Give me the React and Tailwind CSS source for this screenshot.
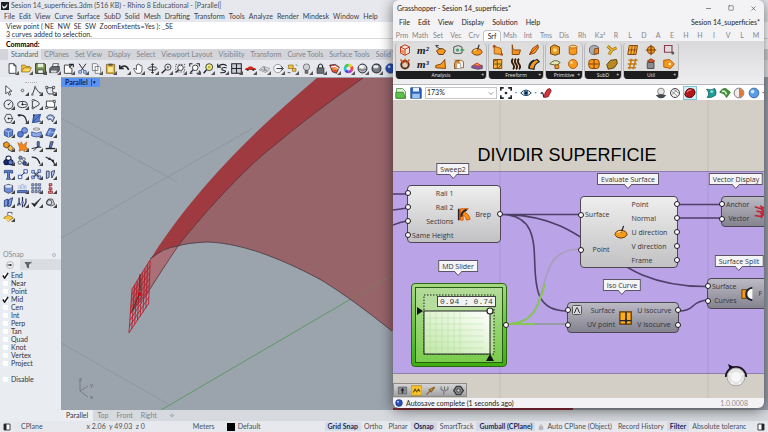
import React, { useState } from "react";
import { Minus, Square, X } from "lucide-react";

const K = "#22252b";
const O = "#f59a1c";
const B = "#5b7fd0";

// 16x16 drawings, keyed by command
const icons = {
  file: <path d="M3 1h7l3 3v11H3zM10 1v3h3" fill="#fff" stroke={K} strokeWidth="1.2" />,
  open: <><path d="M1 13V3h5l1 2h6v2" fill="#f6c443" stroke="#8a6410" /><path d="M1 13l3-6h11l-3 6z" fill="#ffd95e" stroke="#8a6410" /></>,
  save: <><path d="M1 1h13l1 1v13H1z" fill="#7f9a55" stroke={K} strokeWidth="1.4" /><path d="M4 1h8v5H4z" fill="#e8edd8" /><path d="M4 10h8v5H4z" fill="#fff" stroke={K} /></>,
  print: <><path d="M5 6l1-5h8l-2 5" fill="#fff" stroke={K} /><path d="M1 8l3-3h11v6l-3 3H1z" fill="#666a70" stroke={K} /><path d="M3 11h8v3H3z" fill="#ddd" /></>,
  note: <><path d="M2 3h8v4l3 1v7H2z" fill="#fff" stroke={K} strokeWidth="1.2" /><path d="M9 2h6v4M9 6l5-4" fill="none" stroke={K} strokeWidth="1.6" /></>,
  cut: <><path d="M3 1l7 10M13 1L6 11" stroke={K} strokeWidth="1.4" /><circle cx="4.500" cy="13" r="2" fill="none" stroke="#3c62b5" strokeWidth="1.500" /><circle cx="11.500" cy="13" r="2" fill="none" stroke="#3c62b5" strokeWidth="1.500" /></>,
  copy: <path d="M2 1h6l2 2v8H2zM6 5h6l2 2v8H6z" fill="#fff" stroke="#555a62" />,
  paste: <><path d="M2 2h12v13H2z" fill="#e6b736" stroke="#6b5314" /><path d="M5 1h6v3H5z" fill="#555" /><path d="M4.500 6h7v7h-7z" fill="#fbe99c" /></>,
  undo: <path d="M2 7c4-4 9-4 12 3M1 3v5h6" fill="none" stroke={K} strokeWidth="2.200" />,
  hand: <path d="M5 15c-2-3-4-5-4-7l2 0 2 2V3q1-1 2 0V2q1-1 2 0v1q1-1 2 0v1q2-1 2 1v6l-2 4z" fill="#fff" stroke={K} />,
  orbit: <><path d="M8 1v14M6 3l2-2 2 2M6 13l2 2 2-2" fill="none" stroke={K} strokeWidth="1.300" /><ellipse cx="8" cy="8" rx="6.500" ry="2.500" fill="none" stroke={K} strokeWidth="1.300" /></>,
  zoom: <><circle cx="10" cy="6" r="4.500" fill="#f4f6fa" stroke={K} strokeWidth="1.200" /><path d="M7 9l-6 6" stroke={K} strokeWidth="2" /><path d="M10 4v4M8 6h4" stroke={K} /></>,
  zoomWin: <><path d="M1 2h13v11H1z" fill="none" stroke={K} strokeDasharray="2 2" /><circle cx="8" cy="7" r="4" fill="#f4f6fa" stroke={K} strokeWidth="1.200" /><path d="M5 10l-4 4" stroke={K} strokeWidth="2" /></>,
  zoomExt: <><path d="M1 5V1h4M11 1h4v4M15 11v4h-4M5 15H1" fill="none" stroke={K} strokeWidth="1.500" /><circle cx="9" cy="7" r="4" fill="#fff" stroke={K} strokeWidth="1.200" /><path d="M6 10l-4 4" stroke={K} strokeWidth="2" /></>,
  zoomSel: <><circle cx="9" cy="6" r="5" fill="#f3ef8a" stroke={K} strokeWidth="1.200" /><circle cx="9" cy="6" r="2" fill="#c9b93a" /><path d="M5 10l-4 5" stroke={K} strokeWidth="2.200" /></>,
  undoView: <path d="M2 5c4-4 9-3 12-1M1 1v5h5M14 7c-9-2-8 4-4 4s3 4-5 3" fill="none" stroke={K} strokeWidth="1.600" />,
  grid4: <><path d="M1 1h14v14H1z" fill="#c9ccd1" stroke={K} strokeWidth="1.500" /><path d="M8 1v14M1 8h14" stroke={K} strokeWidth="1.500" /></>,
  car: <><path d="M0 9q1-2 4-2l2-2h4l2 2q3 0 4 2v1H0z" fill="#d2291d" /><circle cx="4" cy="10" r="1.400" fill={K} /><circle cx="12" cy="10" r="1.400" fill={K} /></>,
  plane: <><path d="M0 10l6-5 10 3-6 6z" fill="#d5d8dd" stroke="#8d9198" /><path d="M3 9l9 3M6 6l6 5M8 5v6" stroke="#777" /></>,
  cplane: <><circle cx="7" cy="8" r="6" fill="#f6f7f9" stroke="#777" /><path d="M5 8h9M12 5l3 3-3 3" stroke={K} fill="none" strokeWidth="1.300" /></>,
  select: <><path d="M2 3h7v5H2z" fill="#f5c43c" stroke="#8b6a1a" /><path d="M8 8h5v4H8z" fill="#f5c43c" stroke="#8b6a1a" /><path d="M13 2l2 2M1 14h4" stroke={K} /></>,
  bulb: <><circle cx="8" cy="6" r="4.700" fill="#cdd0d6" stroke="#555" /><path d="M6 11h4v4H6z" fill="#777" stroke="#444" /></>,
  lock: <><path d="M5 7V4q3-5 6 0v3" fill="none" stroke={K} strokeWidth="1.600" /><path d="M3 7h10v8H3z" fill="#6b7078" stroke={K} /></>,
  layers: <><path d="M1 3l8-1 6 4-4 9-6-2z" fill="#e34b3d" stroke={K} /><path d="M3 6l6-1 5 3" fill="none" stroke="#fff" strokeWidth="1.600" /><path d="M5 9l5-1 2 2" fill="none" stroke="#f3b13e" strokeWidth="2" /></>,
  wheel: <g fill="none" strokeWidth="4"><path d="M8 3a5 5 0 0 1 4.300 2.500" stroke="#e8d02a" /><path d="M12.300 5.500a5 5 0 0 1 0 5" stroke="#f0452b" /><path d="M12.300 10.500A5 5 0 0 1 8 13" stroke="#d22fc0" /><path d="M8 13a5 5 0 0 1-4.300-2.500" stroke="#3a4be0" /><path d="M3.700 10.500a5 5 0 0 1 0-5" stroke="#2ac1d8" /><path d="M3.700 5.500A5 5 0 0 1 8 3" stroke="#45c53c" /></g>,
  ball: <><circle cx="8" cy="8" r="6.500" fill="#b3b6bc" stroke={K} strokeWidth="1.400" /><ellipse cx="7" cy="5.500" rx="4" ry="2.500" fill="#f3f4f6" /><path d="M2 9q6 3 12 0" stroke="#555" fill="none" /></>,
  ballDark: <><circle cx="8" cy="8" r="6.500" fill="#777b82" stroke={K} strokeWidth="1.500" /><ellipse cx="7" cy="5.500" rx="4" ry="2.500" fill="#e6e8ec" /></>,
  ballBlue: <><circle cx="8" cy="8" r="6.800" fill="#274fb5" stroke="#142b6b" /><circle cx="6" cy="5.500" r="2" fill="#b7c9f5" /></>,
  arrow: <path d="M4 1v12l3-3 2 5 2-1-2-5h4z" fill="#fff" stroke={K} strokeWidth="1.100" />,
  point: <circle cx="8" cy="8" r="1.800" fill="#fff" stroke={K} />,
  polyline: <><path d="M2 14L6 3l4 6 4 3" fill="none" stroke={K} strokeWidth="1.200" /><path d="M1 13h2v2H1zM5 2h2v2H5zM13 11h2v2h-2z" fill="#fff" stroke={K} strokeWidth=".7" /></>,
  curve: <><path d="M3 4h9q-3 4 1 9H5Q1 9 3 4" fill="none" stroke={K} strokeWidth="1.200" /><path d="M1 2h3v3H1zM11 2h3v3h-3zM12 11h3v3h-3z" fill="#fff" stroke={K} /></>,
  circle: <><circle cx="8" cy="8" r="6.500" fill="none" stroke={K} strokeWidth="1.300" /><path d="M8 8l4-4" stroke={K} /><circle cx="8" cy="8" r="1.200" fill={K} /></>,
  ellipse: <><ellipse cx="8" cy="8" rx="7" ry="4.500" fill="none" stroke={K} strokeWidth="1.300" /><path d="M8 4v4h6" fill="none" stroke={K} /><circle cx="8" cy="8" r="1.500" fill={K} /></>,
  arc: <><path d="M4 1q11 4 7 8l-9 5V3" fill="none" stroke={K} strokeWidth="1.200" /><circle cx="3" cy="2" r="1.500" fill="#fff" stroke={K} /><circle cx="3" cy="13" r="1.500" fill="#fff" stroke={K} /></>,
  rect: <><path d="M2 3h12v9H2z" fill="#fff" stroke={K} strokeWidth="1.200" /><path d="M1 11h3v3H1zM12 2h3v3h-3z" fill="#fff" stroke={K} /></>,
  polygon: <><path d="M5 2h6l3 6-3 6H5L2 8z" fill="none" stroke={K} strokeWidth="1.100" /><path d="M8 8h6" stroke={K} /><circle cx="8" cy="8" r="1.300" fill={K} /></>,
  fillet: <><path d="M1 3h5q7 0 8 11" fill="none" stroke={K} strokeWidth="1.700" /><path d="M2 2h3v3H2z" fill={K} /></>,
  surface: <><path d="M4 3l10-1-3 11-9 1z" fill={B} stroke="#24428c" /><path d="M4 3v11M14 2L2 14" stroke="#24428c" /><circle cx="4" cy="3" r="1.200" fill={K} /><circle cx="13" cy="12" r="1.200" fill={K} /></>,
  sheet: <><path d="M2 6q6-7 12 0l-3 7q-2-6-6-3z" fill="#93aae6" stroke={K} /><path d="M5 7q4-3 6 2" fill="none" stroke="#fff" strokeWidth="1.500" /></>,
  box: <><path d="M2 5l5-3 7 2v8l-6 3-6-3z" fill={B} stroke="#1d3470" /><path d="M2 5l6 2 6-3M8 7v8" stroke="#cfdaf8" fill="none" /></>,
  spheres: <><circle cx="5" cy="10.500" r="4.300" fill={B} stroke="#1d3470" /><circle cx="11" cy="5" r="4.300" fill="#7896df" stroke="#1d3470" /></>,
  cylinder: <><ellipse cx="8" cy="3" rx="5" ry="1.500" fill="#fff" stroke="#555" /><path d="M1 7q7 4 14 0v6q-7 3-14 0z" fill="#8ea9ea" stroke="#24428c" /></>,
  slab: <><path d="M6 2l9 1-5 11-9-2z" fill={B} stroke="#1d3470" /><path d="M4 7l9 1M8 3L5 12" stroke="#c6d3f8" /></>,
  join: <><path d="M1 3l5-2 3 3 0 4-4 2-4-2z" fill={O} stroke={K} /><path d="M7 9l4-3 4 4-2 5-5-2z" fill="#f6b94d" stroke={K} /></>,
  explode: <path d="M1 2l4 3 1-4 3 5 5-5-1 7 3 4-5 1 0 3-3-3-5 2 1-5z" fill="#f5861c" stroke="#a24a06" strokeWidth=".7" />,
  trim: <><path d="M9 1h3v7H9z" fill={B} stroke={K} /><path d="M1 11l9-2M4 14l5-5h6" stroke={K} strokeWidth="1.400" fill="none" /></>,
  split: <><path d="M8 1h4l-3 9H6z" fill={B} stroke={K} /><path d="M1 11h14" stroke={K} strokeWidth="2" /></>,
  boolean: <g stroke="#0e1a4a" strokeWidth="1.500"><circle cx="8" cy="5" r="3.700" fill="#fff" /><circle cx="5" cy="10.500" r="3.700" fill="#1c2a66" /><circle cx="11" cy="10.500" r="3.700" fill={B} /></g>,
  group: <><circle cx="5" cy="4" r="2.400" fill="#7896df" stroke={K} /><circle cx="10" cy="6" r="2" fill="#fff" stroke={K} /><circle cx="4" cy="11" r="2.400" fill="#fff" stroke={K} /><circle cx="11" cy="12" r="2.800" fill="#2b53b4" stroke={K} /></>,
  blend: <path d="M1 3q9-1 12 10" fill="none" stroke={K} strokeWidth="1.800" />,
  edit: <><path d="M1 3l6 3q6 2 7 9" fill="none" stroke={K} strokeWidth="1.600" /><path d="M5 4h3v3H5zM10 7h3v3h-3z" fill={K} /></>,
  text: <path d="M2 2h12v4h-2l-1-1H9.500v8l1.500 1v1H5v-1l1.500-1V5H4L3 6H2z" fill={B} stroke="#1d3470" />,
  move: <><path d="M2 9h5v5H2zM10 1h5v5h-5z" fill="#fff" stroke="#274fb5" strokeWidth="1.300" /><path d="M6 10l5-5" stroke={K} strokeWidth="1.300" /></>,
  array: <><path d="M1 2h4v4H1zM10 1h4v4h-4zM1 10h4v4H1zM10 10h4v4h-4zM6 6h4v4H6z" fill="#c7d4f7" stroke="#27418c" /><path d="M4 5l8 7M12 4l-9 8" stroke={K} /></>,
  mirror: <path d="M2 3h4v9l-4 2zM9 4l5-2-1 5-3 6z" fill="#b3c4f2" stroke="#27304f" strokeWidth="1.200" />,
  solid: <><path d="M2 4l6-2 6 2v8l-6 3-6-3z" fill="#6d8cd8" stroke={K} /><ellipse cx="8" cy="5" rx="5" ry="2" fill="#dbe4fb" /></>,
  project: <><path d="M3 9V4h2v5M7 9V2h2v7M11 9V4h2v5" fill="#fff" stroke="#93a6d8" /><path d="M1 11h14l-2 3H0z" fill={B} stroke="#1d3470" /></>,
  grid9: <path d="M1 1h3v3H1zM6 1h3v3H6zM11 1h3v3h-3zM1 6h3v3H1zM6 6h3v3H6zM11 6h3v3h-3zM1 11h3v3H1zM6 11h3v3H6zM11 11h3v3h-3z" fill="#a8b8e6" stroke="#3a4770" />,
  chain: <path d="M6 1h4v3H6zM7 4v3M6 7h4v3H6zM8 10v2M5 12h6v3H5z" fill="#e88" stroke="#8c2f2f" strokeWidth="1.200" />,
  panels: <path d="M2 5l5-2v9l-5 2zM8 4l6-3-3 12-4 1z" fill="#7d99e2" stroke="#1d3470" strokeWidth="1.200" />,
  twist: <><path d="M3 1v7l2 4M8 0v15M13 2v6l-3 6M2 9l-1 4" stroke="#27304f" strokeWidth="1.800" fill="none" /><circle cx="8" cy="8" r="2" fill={B} /></>,
  check: <path d="M1 9l4 5 9-12-9 8z" fill={K} stroke={K} />,
  shapes: <><path d="M2 10l3-7h6l3 8-5 2z" fill="#d7dade" stroke={K} /><circle cx="6" cy="8" r="4" fill="none" stroke={K} /></>,
  gumball: <><path d="M1 10q7-7 14 0l-7 5z" fill="#f5c43c" stroke="#8b6a1a" /><path d="M7 6V2h6v3" fill="#fff" stroke={K} /><path d="M3 12l6 2" stroke="#fff2b0" strokeWidth="1.500" /></>,
  // grasshopper
  brep: <><path d="M2 4l6-3 6 3v8l-6 3-6-3z" fill="#f3e0d6" stroke="#c03a14" strokeWidth="1.300" /><path d="M2 4l6 3 6-3M8 7v8" fill="none" stroke="#c03a14" strokeWidth="1.300" /><path d="M3 11l4 2V9L3 7z" fill="#f08a5c" /></>,
  hoop: <><circle cx="8" cy="9" r="5" fill="#d9cdbd" stroke="#5a2a0c" strokeWidth="2.500" /><path d="M2 2l4 5M8 1v5M14 2l-4 5" stroke="#d3531c" strokeWidth="2" /></>,
  bowl: <><path d="M2 9q6-6 12 0l-3 5H5z" fill={O} stroke="#5a3206" strokeWidth="1.200" /><path d="M1 2l6 5M3 5L1 2h4" stroke={K} fill="none" /></>,
  wedge: <path d="M1 10l7-2 5-6 1 12-13-1z" fill={O} stroke="#7a3e05" strokeWidth="1.200" />,
  tag: <><path d="M1 4q6-4 11 0v8q-6 2-11 0z" fill="#d7dbd9" stroke="#4c5753" strokeWidth="1.300" /><circle cx="6" cy="8" r="2" fill="#3c9c5f" /><path d="M10 8h5" stroke="#3c9c5f" strokeWidth="2" /></>,
  roll: <><path d="M2 3h9l3 2v8H8" fill="#f7efdf" stroke="#8a4a0c" /><path d="M2 14V7q1-4 6-4v11z" fill={O} stroke="#7a3e05" /><path d="M5 7h5v7H5z" fill="#fff" stroke="#999" /></>,
  pot: <><path d="M1 11q1-5 7-5t7 5q-2 4-7 4t-7-4z" fill={O} stroke="#6b3605" strokeWidth="1.100" /><path d="M8 9l3-8" stroke={K} strokeWidth="1.500" /><path d="M4 9q2-2 5-1" stroke="#ffe3a3" strokeWidth="1.500" fill="none" /></>,
  dome: <><path d="M1 11l5-3 9 2v4l-6 1-8-2z" fill="#8e4fa8" stroke="#444" /><path d="M4 10q4-7 9 1z" fill="#f08a5c" stroke="#c03a14" /></>,
  quad: <><path d="M3 3l9 3 1 8-10-1z" fill="#f6a63a" stroke="#a05a0c" strokeWidth="1.300" /><circle cx="3" cy="3" r="2" fill="#b84c17" /><circle cx="13" cy="14" r="1.700" fill="#b84c17" /></>,
  mesh: <><path d="M2 2h11v12H2z" fill="#f6b23c" stroke="#7a4a0a" strokeWidth="1.300" /><path d="M2 8h11M7 2v12M2 5l5-3M8 14l5-6" stroke="#7a4a0a" strokeWidth="1.300" /></>,
  vee: <path d="M3 1q0 6 3 7l8 0-2 6H3z" fill="#f2921f" stroke="#8a4506" strokeWidth="1.300" />,
  waves: <path d="M4 1q-3 3 0 7t0 7M8 1q-3 3 0 7t0 7M12 1q-3 3 0 7t0 7" fill="none" stroke="#3a1d04" strokeWidth="2.500" />,
  leaf: <><path d="M2 14L6 6l7-5 1 4-5 7z" fill={O} stroke="#7a3e05" strokeWidth="1.200" /><path d="M2 14L13 3" stroke="#c9360f" strokeWidth="1.300" /></>,
  sweep: <><path d="M2 14q0-9 10-12l3 3q-7 3-7 10z" fill={O} stroke={K} strokeWidth="1.600" /><path d="M1 14q0-8 7-11" stroke={K} strokeWidth="2" fill="none" /></>,
  can: <><path d="M2 4l5-3 7 3v9l-6 2-6-2z" fill="#e79a22" stroke="#6b4108" strokeWidth="1.300" /><circle cx="8" cy="8" r="2.500" fill="#ffd87a" /></>,
  cyl: <><path d="M3 3v10q5 3 10 0V3" fill={O} stroke="#a9540a" strokeWidth="1.200" /><ellipse cx="8" cy="3.500" rx="5" ry="2" fill="#ffcb6d" stroke="#a9540a" /></>,
  cone: <><path d="M1 8q6-8 14-2l-4 3-1 5-3-5z" fill="#e5e6b8" stroke="#5d5a26" strokeWidth="1.200" /><path d="M8 9h5v5H8z" fill={O} stroke="#7a3e05" /></>,
  orange: <><circle cx="8" cy="8" r="6" fill={O} stroke="#b55c08" strokeWidth="1.200" /><circle cx="6" cy="6" r="2" fill="#ffd48a" /></>,
  subd: <><path d="M2 5q5-6 12-1v8q-7 5-12-1z" fill="#a9abb0" stroke="#555" /><path d="M9 6h5v7H8z" fill="#e8862a" stroke="#7a3e05" /></>,
  quadBall: <><rect x="1" y="2" width="14" height="12" rx="4" fill={O} stroke="#8a4506" strokeWidth="1.300" /><path d="M8 2v12M1 8h14" stroke="#8a4506" strokeWidth="1.500" /></>,
  pipes: <><path d="M2 3l6 5 6-3M8 8l-4 6" fill="none" stroke="#8a6410" strokeWidth="4" /><path d="M2 3l6 5 6-3M8 8l-4 6" fill="none" stroke="#e9b32c" strokeWidth="2.500" /></>,
  blob: <path d="M1 9l5-6 8-1 1 5-4 6-8 2z" fill="#b98a22" stroke="#5d420a" strokeWidth="1.300" />,
  lattice: <><path d="M3 2h11l-2 12H1z" fill="#f6b23c" stroke="#8a4506" strokeWidth="1.300" /><path d="M7 2L5 14M11 2L9 14M2 8h11" stroke="#8a4506" strokeWidth="1.200" /></>,
  hatch: <path d="M2 3h12M1 8h12M1 13h11M6 1L3 15M12 1L8 15" stroke="#c57a12" strokeWidth="2" />,
  globe: <><circle cx="8" cy="8" r="5" fill={O} stroke="#7a3e05" strokeWidth="1.200" /><path d="M8 1v14M1 8h14" stroke="#7a3e05" strokeWidth="1.500" /></>,
  bin: <><path d="M3 6h9v8H3z" fill="#888b91" stroke="#333" /><path d="M3 4l5-3 5 3-5 2z" fill="#e4572a" stroke="#7a2605" /></>,
  frame: <><path d="M2 2h10v9H2z" fill="none" stroke="#8c3a4c" strokeWidth="1.500" /><circle cx="13" cy="12" r="2" fill="#555" /></>,
  price: <><path d="M1 3l8-1 6 6-5 6-9-2z" fill={O} stroke="#a85408" strokeWidth="1.200" /><circle cx="9" cy="8" r="1.500" fill="#fff" /></>,
  ghOpen: <><path d="M2 2h8l4 4v9H2z" fill="#dcefd5" stroke="#3d8a35" /><path d="M1 7h10l3 8H1z" fill="#5fc04a" stroke="#2d7a25" /></>,
  ghSave: <><path d="M1 1h13l1 2v12H1z" fill="#2b67bf" stroke="#16407f" /><path d="M4 1h8v5H4z" fill="#e6eefb" /><path d="M3 9h10v6H3z" fill="#9fc1ee" /></>,
  focus: <><path d="M1 5V1h4M11 1h4v4M15 11v4h-4M5 15H1v-4" fill="none" stroke={K} strokeWidth="2.400" /><circle cx="8" cy="8" r="1.800" fill={K} /></>,
  eye: <><path d="M1 8q7-8 14 0-7 7-14 0z" fill="#fff" stroke="#1d3850" strokeWidth="1.300" /><circle cx="8" cy="8" r="3.200" fill="#2a6a9c" /><circle cx="8" cy="8" r="1.300" fill="#000" /></>,
  sketch: <><path d="M1 9q2-3 3 0t1 5" fill="none" stroke={K} strokeWidth="1.500" /><path d="M6 14q-1-6 4-11l3-1 2 3-4 8z" fill="#d4343c" stroke="#7c1218" /></>,
  pvOff: <><circle cx="8" cy="6" r="4.500" fill="#e6e6e6" stroke="#666" /><path d="M1 11q7-3 14 0-3 4-7 4t-7-4z" fill="#44474d" /></>,
  pvWire: <><circle cx="8" cy="8" r="6" fill="#f2f2f4" stroke="#333" strokeWidth="1.200" /><path d="M3 5l9 8M6 3l8 6M3 11L11 3" stroke="#777" /></>,
  pvRed: <><path d="M1 10Q3 2 8 2l5 1q3 4 1 7-3 5-7 4-5 0-6-4z" fill="#b3191b" stroke="#5a0709" strokeWidth="1.300" /><path d="M4 7q2-4 6-3" fill="none" stroke="#ef7a76" strokeWidth="1.500" /></>,
  teal: <><path d="M2 3q6 2 11-1 3 5 1 9-5 4-11 3 4-6-1-11z" fill="#1f9c98" stroke="#0f5f5c" /><circle cx="9" cy="6" r="2" fill="#7fe0d8" /></>,
  green: <><path d="M1 7q3-6 8-5l6 5-5 7q-2-6-9-7z" fill="#3f9a35" stroke="#1d5c17" /><path d="M4 6q4-2 6 4" stroke="#e4f6df" strokeWidth="2" fill="none" /></>,
  half: <><circle cx="8" cy="8" r="6.500" fill="#eee" stroke="#555" /><path d="M8 2a6 6 0 0 1 0 12z" fill="#e07a3a" /></>,
  blue: <><circle cx="8" cy="8" r="6.500" fill="#5b9be6" stroke="#235497" /><circle cx="6" cy="6" r="2.500" fill="#cfe3fb" /></>,
  // node and widget pictures
  sweep2: <><path d="M2 2v13" stroke={K} strokeWidth="2" /><path d="M4 2h9l-4 4q5 2 6 8l-4 1q-1-5-4-6v6H4z" fill="#ff9412" stroke="#d2500a" /><path d="M5 11Q5 5 11 3" stroke={K} strokeWidth="2.300" fill="none" /></>,
  iso: <><path d="M1 1h13v14H1z" fill="#ffab1c" stroke="#5c3700" strokeWidth="1.400" /><path d="M8 1v14M1 11h13" stroke={K} strokeWidth="1.700" /><circle cx="8" cy="11" r="1.600" fill={K} /></>,
  splitSrf: <><path d="M1 3h5v10H1z" fill={O} stroke="#5c3700" /><path d="M13 1Q6 2 6 8t7 7" fill="#fff" stroke={K} strokeWidth="2.300" /></>,
  vectors: <path d="M2 2l6 2 3-1M4 7l6 1 3-1M2 12l6 1 3-2M8 1l4 2-3 3M10 5l4 2-3 3M8 9l4 2-3 4" fill="none" stroke="#c42433" strokeWidth="1.800" />,
  lamp: <><path d="M2 3h12v10H2z" fill="#8d8f94" stroke="#555" /><path d="M8 4l3 4H9v4H7V8H5z" fill={K} /></>,
  quake: <><path d="M0 1h16v14H0z" fill="#f6c52c" stroke="#b08508" /><path d="M3 11l3-5 2 4 3-4 2 4" fill="none" stroke="#6b4a00" strokeWidth="1.500" /></>,
  plug: <path d="M2 14l5-5M6 7l3 3 5-7z" fill={O} stroke="#8b6222" strokeWidth="1.800" />,
  fork: <path d="M3 2v4l4 3v5M8 2v6M13 2v4L9 9" fill="none" stroke="#6d6f75" strokeWidth="1.500" />,
  gear: <><path d="M5 2h6l4 6-4 6H5L1 8z" fill="#8a8c90" stroke="#3a3c40" strokeWidth="2" /><circle cx="8" cy="8" r="2.600" fill="#c5c6c8" stroke="#3a3c40" strokeWidth="1.400" /></>,
  sidebar: <><path d="M2 2h12v12H2z" fill="#fff" stroke={K} strokeWidth="1.700" /><path d="M2 2h5v12H2z" fill={K} /></>,
  filter: <path d="M2 3h11l-4 5v6l-3-2V8zM14 1v4" fill="#666a72" stroke={K} />,
};

function Icon({ name, className = "size-3" }) {
  return (
    <svg viewBox="0 0 16 16" fill="none" className={className + " shrink-0"} aria-hidden="true">
      {icons[name]}
    </svg>
  );
}

const menus = ["File", "Edit", "View", "Curve", "Surface", "SubD", "Solid", "Mesh", "Drafting", "Transform", "Tools", "Analyze", "Render", "Mindesk", "Window", "Help"];
const toolTabs = ["Standard", "CPlanes", "Set View", "Display", "Select", "Viewport Layout", "Visibility", "Transform", "Curve Tools", "Surface Tools", "Solid Tools"];
const stdTools = ["file", "open", "save", "print", "note", "cut", "copy", "paste", "undo", "hand", "orbit", "zoom", "zoomWin", "zoomExt", "zoomSel", "undoView", "grid4", "car", "plane", "cplane", "select", "bulb", "lock", "layers", "wheel", "ball", "ballDark", "ballBlue"];
const sideTools = ["arrow", "point", "polyline", "curve", "circle", "ellipse", "arc", "rect", "polygon", "fillet", "surface", "sheet", "box", "spheres", "cylinder", "slab", "join", "explode", "trim", "split", "boolean", "group", "blend", "edit", "text", "move", "array", "mirror", "solid", "project", "grid9", "chain", "panels", "twist", "check", "shapes", "gumball"];
const snaps = ["End", "Near", "Point", "Mid", "Cen", "Int", "Perp", "Tan", "Quad", "Knot", "Vertex", "Project"];

const ghTabs = ["Prm", "Math", "Set", "Vec", "Crv", "Srf", "Msh", "Int", "Tms", "Dis", "Rh", "Ka²"];
const ghTabsShort = ["R", "L", "D", "A", "E", "H", "H", "I", "V", "L", "M"];
const ribbon = [
  { name: "Analysis", top: ["brep", "m²", "bowl", "tag", "pot"], bottom: ["hoop", "m³", "wedge", "roll", "dome"] },
  { name: "Freeform", top: ["quad", "vee", "leaf"], bottom: ["mesh", "waves", "sweep"] },
  { name: "Primitive", top: ["can", "cyl"], bottom: ["cone", "orange"] },
  { name: "SubD", top: ["subd", "pipes"], bottom: ["quadBall", "blob"] },
  { name: "Util", top: ["lattice", "globe", "frame"], bottom: ["hatch", "bin", "price"] },
];

function Snap({ label, checked, onChange }) {
  return (
    <label className="flex h-2 items-center gap-[3px]">
      <span className="relative flex size-[5px]">
        <input type="checkbox" checked={checked} onChange={onChange} className="size-[5px] appearance-none bg-white" />
        {checked && (
          <svg viewBox="0 0 8 8" className="pointer-events-none absolute -left-px -top-px size-[7px]">
            <path d="M1 4l2 3 4-6" fill="none" stroke="#111" strokeWidth="1.600" />
          </svg>
        )}
      </span>
      {label}
    </label>
  );
}

function SidePanel() {
  const [on, setOn] = useState({ End: true, Mid: true });
  const toggle = (s) => setOn({ ...on, [s]: !on[s] });
  return (
    <aside className="flex w-[61px] shrink-0 flex-col bg-[#e9ecf1]">
      <div className="mx-auto mt-px h-[5px] w-3 border-b border-dotted border-[#b9a9a4]" />
      <div className="grid grid-cols-4 pl-px pr-1">
        {sideTools.map((t) => (
          <button key={t} aria-label={t} className="relative flex h-[14px] items-center justify-center">
            <Icon name={t} className="size-[11px]" />
            {t !== "arrow" && <span className="absolute bottom-px right-0 border-2 border-transparent border-b-[#444] border-r-[#444]" />}
          </button>
        ))}
      </div>
      <div className="mt-[27px] flex items-center justify-between px-[3px] text-[#8a8e96]">
        <span>OSnap</span>
        <span className="mr-[2px] size-1 rounded-full border border-[#b4b8bf]" />
      </div>
      <div className="flex h-[11px] items-center bg-[#d9dce1]">
        <button aria-label="Object snaps" className="flex h-full w-5 items-center justify-center bg-[#eceef2]">
          <svg viewBox="0 0 16 16" className="size-2"><circle cx="8" cy="8" r="7" fill="none" stroke="#888" /><path d="M3 8h8" stroke="#333" strokeWidth="2" /><circle cx="9" cy="8" r="2" fill="#333" /></svg>
        </button>
        <button aria-label="Filter" className="ml-1 flex"><Icon name="filter" className="size-2" /></button>
      </div>
      <div className="mt-px flex flex-col pl-[3px] text-[#2f333b]">
        {snaps.map((s) => <Snap key={s} label={s} checked={!!on[s]} onChange={() => toggle(s)} />)}
        <div className="h-2" />
        <Snap label="Disable" checked={!!on.Disable} onChange={() => toggle("Disable")} />
      </div>
    </aside>
  );
}

function Viewport() {
  const steps = [0, 1, 2, 3, 4, 5, 6, 7];
  return (
    <div className="relative min-h-0 flex-1 overflow-hidden bg-[#9ba3ad]">
      <svg viewBox="61 77 707 333" preserveAspectRatio="xMinYMin slice" className="size-full" fill="none">
        <g stroke="#8a929b" strokeWidth=".7">
          <path d="M61 118L177 182M61 238L253 128M61 343L168 404" />
        </g>
        <path d="M161 410L392 275L500 212" stroke="#5d9a61" strokeWidth="1" />
        <path d="M317 78C277 112 243 143 207 184C182 213 168 232 150 260L163 250Q172 247 178 246Q186 243 207 242C246 243 290 263 323 281Q352 299 392 331H420V78Z" fill="#97646a" />
        <path d="M317 78C277 112 243 143 207 184C182 213 168 232 150 260L163 250Q172 247 178 246C207 209 247 167 270 149Q310 115 363 78Z" fill="#9f3a40" />
        <path d="M150 260Q163 248 178 246Q162 270 150 289L130 314L132 289Z" fill="#ab676d" opacity=".85" />
        <path d="M352 299L392 275" stroke="#7f7b5e" />
        <path d="M363 78Q310 115 270 149C247 167 207 209 178 246Q162 270 150 289L130 314" stroke="#5a3138" strokeWidth=".8" />
        <path d="M150 259Q163 248 178 246Q186 243 207 242C246 243 290 263 323 281Q352 299 392 331" stroke="#46363d" strokeWidth=".8" />
        <g stroke="#b3202e" strokeWidth=".9">
          {steps.map((i) => <path key={i} d={`M${132 + i * 2.6} ${289 - i * 4.1}L${129 + i * 2.8} ${333 - i * 4.1}`} />)}
          {steps.map((i) => <path key={"h" + i} d={`M${132 - i * 0.4} ${289 + i * 6.2}L${150 - i * 0.2} ${260 + i * 6.2}`} />)}
        </g>
        <path d="M140 274v17M132 311l8-18" stroke="#4b2a1a" />
        <circle cx="139.500" cy="294" r="2" fill="#c3101c" />
        <g stroke="#6d747d" strokeWidth=".8">
          <path d="M80 380v11l8-5M80 391l8 6" />
        </g>
        <path d="M393 409h180" stroke="#8e2f38" strokeWidth="2" />
        <g fill="#5f666f" className="text-[6px]">
          <text x="79" y="381">z</text>
          <text x="90" y="387">y</text>
          <text x="90" y="399">x</text>
        </g>
      </svg>
      <button className="absolute left-0 top-px flex h-[9px] items-center gap-[3px] bg-[#5b93f2] px-1 font-bold text-[#12254f]">
        Parallel
        <span className="border-l border-[#2d4f92] pl-px text-[5px] leading-[7px]">▾</span>
      </button>
    </div>
  );
}

function GhIcon({ name }) {
  return (
    <button aria-label={name} className="flex h-[14px] w-[18px] items-center justify-center">
      {icons[name] ? <Icon name={name} className="size-3" /> : <i className="font-['Liberation_Serif',serif] text-[11px] leading-3 font-bold text-[#1b1b1b]">{name}</i>}
    </button>
  );
}

function Tag({ children, className }) {
  return (
    <div className={"absolute flex h-[12px] -translate-x-1/2 items-center whitespace-nowrap border border-[#5b5466] bg-[#f5f4f7] px-[3px] text-[#333] " + className}>
      {children}
      <svg viewBox="0 0 8 5" className="absolute left-1/2 top-[10px] h-[5px] w-2 -translate-x-1/2">
        <path d="M0 0L4 4.500L8 0" fill="#f5f4f7" stroke="#5b5466" />
      </svg>
    </div>
  );
}

function Port({ side }) {
  return <span className={"size-[6px] shrink-0 rounded-full border border-[#1c1822] bg-white " + (side === "in" ? "-ml-[3px]" : "-mr-[3px] ml-auto")} />;
}

function Node({ className, inputs, outputs = [], icon, dark, glyph }) {
  return (
    <div className={"absolute flex items-stretch gap-1 rounded-sm border border-[#4c4753] text-[#333238] " + (dark ? "bg-linear-to-b from-[#bcbac4] to-[#85838f] " : "bg-linear-to-b from-[#eeeeee] to-[#c2c2c4] ") + className}>
      <div className="flex flex-col justify-around">
        {inputs.map((t, i) => (
          <div key={t} className="flex h-[13px] items-center gap-px whitespace-nowrap">
            <Port side="in" />
            {glyph && (
              <svg viewBox="0 0 10 10" className={"mr-1 size-[10px] shrink-0 " + (i ? "invisible" : "")}>
                <rect x=".5" y=".5" width="9" height="9" rx="1" fill="#d9d8de" stroke="#555" />
                <path d="M2 8q1 0 2-4 1-3 2 0 1 4 2 4" fill="none" stroke="#333" />
              </svg>
            )}
            <span className="ml-auto">{t}</span>
          </div>
        ))}
      </div>
      <div className="flex items-center"><Icon name={icon} className="size-[14px]" /></div>
      <div className="flex flex-1 flex-col justify-around">
        {outputs.map((t) => (
          <div key={t} className="flex h-[13px] items-center whitespace-nowrap">{t}<Port side="out" /></div>
        ))}
      </div>
    </div>
  );
}

function MdSlider() {
  return (
    <div className="absolute left-[18px] top-[183px] h-[84px] w-[96px] rounded border border-[#2c6a10] bg-linear-to-b from-[#a5d884] via-[#6cc23c] to-[#3fae0c] p-[3px]">
      <svg viewBox="0 0 88 76" className="size-full" fill="none">
        <defs>
          <linearGradient id="pad" x1="0" y1="1" x2="1" y2="0">
            <stop offset="0" stopColor="#bfe8a5" />
            <stop offset="1" stopColor="#ffffff" />
          </linearGradient>
          <linearGradient id="frame" x1="0" y1="0" x2="0" y2="1">
            <stop offset="0" stopColor="#b4dc9a" />
            <stop offset="1" stopColor="#79cc4c" />
          </linearGradient>
        </defs>
        <rect x=".5" y=".5" width="87" height="75" fill="url(#frame)" stroke="#285c12" />
        <rect x="9" y="8" width="70" height="59" fill="#b5dd9c" stroke="#222" strokeDasharray="1.500 1.500" />
        <rect x="9" y="24" width="66" height="43" fill="url(#pad)" stroke="#222" />
        <path d="M15 24v43M21 24v43M27 24v43M33 24v43M39 24v43M45 24v43M9 31h60M9 37h60M9 43h60M9 49h60M9 55h60M9 61h60" stroke="#9fcf85" strokeWidth=".3" />
        <path d="M2 20v8l6-4zM71 74h8l-4-7z" fill="#111" />
        <circle cx="75" cy="24" r="3" fill="#fff" stroke="#222" strokeWidth="1.200" />
      </svg>
      <output className="absolute left-[25px] top-[12px] flex h-[11px] items-center whitespace-pre border border-[#444] bg-[#f1f3ef] px-[2px] font-['Liberation_Mono',monospace] text-[8px] leading-none text-[#444]">0.94 ; 0.74</output>
      <span className="absolute -right-[3px] top-[38px] size-[6px] rounded-full border border-[#1c1822] bg-white" />
    </div>
  );
}

function Canvas() {
  return (
    <div className="relative min-h-0 flex-1 overflow-hidden bg-[#d3cec6] font-['Open_Sans','Noto_Sans',sans-serif]">
      <div className="absolute inset-x-0 top-[71px] h-[203px] border-y border-[#8f80ab] bg-[#bba3e8]" />
      <svg className="absolute inset-0 size-full" fill="none">
        <path d="M107 0v298M315 0v298" stroke="#00000012" />
        <g transform="translate(-393 -100)" strokeWidth="1.600" stroke="#4e3f66">
          <path d="M393 194h14M393 210q8-1 14-2M393 225q7-3 14-4" />
          <path d="M501 214.500H580M501 214.500C600 214.500 600 286.500 706 286.500M501 214.500C565 214.500 505 311 567 311M678 204.500h44M678 218h44M679 311q9 0 14-5t14-6" />
          <path d="M507 324C560 324 526 249 580 249" stroke="#a79fb8" />
          <path d="M507 324H567" stroke="#8c9a8c" />
          <path d="M507 324h28M507 324C535 324 539 304 545 284" stroke="#86c655" strokeWidth="2" />
        </g>
      </svg>
      <h1 className="absolute left-[174px] -translate-x-1/2 top-[45px] whitespace-nowrap font-['Liberation_Sans',sans-serif] text-[18px] leading-5 text-black">DIVIDIR SUPERFICIE</h1>

      <Tag className="left-[60px] top-[63px]">Sweep2</Tag>
      <Tag className="left-[235px] top-[73px]">Evaluate Surface</Tag>
      <Tag className="left-[343px] top-[73px]">Vector Display</Tag>
      <Tag className="left-[65px] top-[160px]">MD Slider</Tag>
      <Tag className="left-[346px] top-[155px]">Surface Split</Tag>
      <Tag className="left-[229px] top-[179px]">Iso Curve</Tag>

      <Node className="left-[14px] top-[85px] h-[58px] w-[94px]" inputs={["Rail 1", "Rail 2", "Sections", "Same Height"]} outputs={["Brep"]} icon="sweep2" />
      <Node className="left-[187px] top-[96px] h-[72px] w-[98px]" inputs={["Surface", "Point"]} outputs={["Point", "Normal", "U direction", "V direction", "Frame"]} icon="pot" />
      <Node className="left-[328px] top-[96px] h-[31px] w-[70px]" inputs={["Anchor", "Vector"]} icon="vectors" dark />
      <Node className="left-[314px] top-[178px] h-[31px] w-[80px]" inputs={["Surface", "Curves"]} outputs={["F"]} icon="splitSrf" dark />
      <Node className="left-[174px] top-[202px] h-[31px] w-[112px]" inputs={["Surface", "UV point"]} outputs={["U Isocurve", "V Isocurve"]} icon="iso" dark glyph />
      <MdSlider />

      <svg viewBox="0 0 24 24" className="absolute bottom-[11px] right-4 size-6">
        <path d="M2 14A10 10 0 0 1 22 14" fill="none" stroke="#17101f" strokeWidth="2.200" />
        <path d="M4 1l6 3-4 3z" fill="#17101f" />
        <circle cx="12" cy="14" r="9" fill="#e4e3e3" stroke="#aaa" />
        <circle cx="12" cy="14" r="5" fill="#f7f7f7" />
        <g fill="#fff"><circle cx="6" cy="11" r="1" /><circle cx="18" cy="11" r="1" /><circle cx="8" cy="20" r="1" /><circle cx="16" cy="20" r="1" /></g>
      </svg>

      <div className="absolute bottom-px left-0 flex h-[14px] items-center gap-[2px] border border-[#8e8b86] bg-linear-to-b from-[#d6d6d6] to-[#a2a2a4] px-[2px]">
        {["lamp", "quake", "plug", "fork", "gear"].map((n) => (
          <button key={n} aria-label={n} className="flex w-3 justify-center"><Icon name={n} className="size-[11px]" /></button>
        ))}
      </div>
    </div>
  );
}

function Grasshopper() {
  return (
    <section className="absolute bottom-6 left-[393px] right-[4px] top-0 flex flex-col overflow-hidden rounded-md bg-[#f3f2f4] text-[#222] shadow-[0_2px_14px_rgba(0,0,0,0.55)]">
      <header className="flex h-4 shrink-0 items-center justify-between pl-1 pr-[7px]">
        <span>Grasshopper - Sesion 14_superficies*</span>
        <div className="flex gap-4 text-[#333]">
          <button aria-label="Minimize"><Minus size={7} /></button>
          <button aria-label="Maximize"><Square size={6} /></button>
          <button aria-label="Close"><X size={7} /></button>
        </div>
      </header>
      <nav className="flex h-[13px] shrink-0 items-center gap-2 pl-[6px] pr-1">
        {["File", "Edit", "View", "Display", "Solution", "Help"].map((m) => <button key={m}>{m}</button>)}
        <span className="ml-auto">Sesion 14_superficies*</span>
      </nav>
      <div className="flex h-3 shrink-0 items-end text-[#85858a]">
        {ghTabs.map((t) => (
          <button key={t} className={t === "Srf" ? "h-[11px] w-[18px] rounded-t-sm border border-b-0 border-[#c2c2c6] bg-white text-[#222]" : "h-[11px] w-[18px]"}>{t}</button>
        ))}
        {ghTabsShort.map((t, i) => <button key={i} className="h-[11px] w-[14px]">{t}</button>)}
      </div>
      <div className="flex h-[44px] shrink-0 items-start gap-px border-b border-[#b8b8bc] bg-linear-to-b from-[#d9d9db] to-[#eeeef0] pl-[2px] pt-[2px]">
        {ribbon.map((g) => (
          <div key={g.name} className="overflow-hidden rounded-sm border-x border-[#b9b9bd] bg-[#dededf]">
            <div className="flex">{g.top.map((n) => <GhIcon key={n} name={n} />)}</div>
            <div className="flex">{g.bottom.map((n) => <GhIcon key={n} name={n} />)}</div>
            <div className="relative flex h-2 items-center justify-center bg-[#1d1d1f] font-['Open_Sans',sans-serif] text-[5px] leading-none text-[#e8e8e8]">
              {g.name}
              <span className="absolute right-[2px]">+</span>
            </div>
          </div>
        ))}
      </div>
      <div className="flex h-[15px] shrink-0 items-center gap-[3px] bg-white pl-[2px]">
        <button aria-label="Open"><Icon name="ghOpen" /></button>
        <button aria-label="Save"><Icon name="ghSave" /></button>
        <select aria-label="Zoom" className="h-3 w-[72px] appearance-none border border-[#c5c5c9] bg-white px-px text-[7px] leading-none">
          <option>173%</option>
        </select>
        <svg viewBox="0 0 8 8" className="pointer-events-none -ml-[12px] mr-px size-[6px]"><path d="M1 3l3 3 3-3" fill="none" stroke="#777" /></svg>
        <button aria-label="Zoom extents" className="ml-[2px]"><Icon name="focus" /></button>
        <span>·</span>
        <button aria-label="Named views"><Icon name="eye" /></button>
        <span>·</span>
        <button aria-label="Sketch"><Icon name="sketch" /></button>
        <div className="ml-auto flex items-center gap-[2px]">
          <button aria-label="No preview"><Icon name="pvOff" /></button>
          <button aria-label="Wireframe preview"><Icon name="pvWire" /></button>
          <button aria-label="Shaded preview" className="flex size-[14px] items-center justify-center border border-[#7cc3d6] bg-[#d6eef5]"><Icon name="pvRed" /></button>
          <span className="w-1" />
          <button aria-label="Selected only"><Icon name="teal" /></button>
          <button aria-label="Document preview"><Icon name="green" /></button>
          <button aria-label="Preview mesh"><Icon name="half" /></button>
          <button aria-label="Preview quality" className="ml-px"><Icon name="blue" /></button>
          <span>·</span>
        </div>
      </div>
      <Canvas />
      <footer className="flex h-[10px] shrink-0 items-center gap-[3px] pl-[2px] pr-4">
        <Icon name="ballBlue" className="size-2" />
        <span>Autosave complete (1 seconds ago)</span>
        <span className="ml-auto text-[#8d8d92]">1.0.0008</span>
      </footer>
    </section>
  );
}

export default function App() {
  return (
    <div className="relative flex h-screen flex-col overflow-hidden bg-[#e6e8ed] font-['Lato','Open_Sans',sans-serif] text-[7px] leading-[9px] text-[#3d414a]">
      <header className="flex h-[11px] shrink-0 items-center gap-[2px] px-px text-[#4a4e57]">
        <svg viewBox="0 0 16 16" className="size-2">
          <path d="M0 0h16v16H0z" fill="#1b1e22" />
          <path d="M1 5q4 6 8 3l4-5-1 6q-3 5-8 4z" fill="#e7e9ec" />
        </svg>
        Sesion 14_superficies.3dm (516 KB) - Rhino 8 Educational - [Parallel]
      </header>
      <nav className="flex h-[11px] shrink-0 items-center gap-1 pl-1">
        {menus.map((m) => <button key={m}>{m}</button>)}
      </nav>
      <div className="shrink-0 bg-white pl-[6px] text-[#2f323a]">
        <div className="flex h-[17px] flex-col justify-end border-b border-[#d9dbdf] leading-2">
          <p>View point ( NE&nbsp; NW&nbsp; SE&nbsp; SW&nbsp; ZoomExtents=Yes ): _SE</p>
          <p>3 curves added to selection.</p>
        </div>
        <label className="flex h-[10px] items-center font-bold text-black">
          Command:
          <input aria-label="Command" className="ml-1 flex-1 font-normal outline-none" />
        </label>
      </div>
      <div className="flex h-[11px] shrink-0 items-center whitespace-nowrap bg-[#d3d5da] pl-2 text-[#80848c]">
        {toolTabs.map((t, i) => (
          <button key={t} className={i === 0 ? "h-full bg-[#e6e8ed] px-[3px] text-[#5e626a]" : "px-[3px]"}>{t}</button>
        ))}
      </div>
      <div className="flex h-[17px] shrink-0 items-center pl-[5px]">
        {stdTools.map((t) => (
          <button key={t} aria-label={t} className="relative flex h-full w-[14px] items-center justify-center">
            <Icon name={t} className="size-[11px]" />
            <span className="absolute bottom-[2px] right-0 border-2 border-transparent border-b-[#555] border-r-[#555]" />
          </button>
        ))}
      </div>
      <main className="flex min-h-0 flex-1">
        <SidePanel />
        <div className="flex min-w-0 flex-1 flex-col">
          <Viewport />
          <div className="flex h-[11px] shrink-0 items-center gap-2 bg-[#d6d9de] text-[#80848c]">
            <button className="-mr-1 h-full bg-[#eceef2] px-[5px] text-[#33373e]">Parallel</button>
            <button>Top</button>
            <button>Front</button>
            <button>Right</button>
            <span className="ml-1">✧</span>
          </div>
        </div>
      </main>
      <footer className="flex h-[11px] shrink-0 items-center whitespace-nowrap px-[3px] text-[#4c5058]">
        <button aria-label="Left panel"><Icon name="sidebar" className="size-2" /></button>
        <span className="ml-[10px]">CPlane</span>
        <span className="ml-11">x 2.06&nbsp; y 49.03&nbsp; z 0</span>
        <span className="ml-12">Meters</span>
        <span className="ml-3 flex items-center gap-[3px]"><i className="size-2 bg-black" />Default</span>
        <div className="ml-16 flex items-center">
          <button className="bg-[#d5dae8] px-[3px] font-bold text-[#1d2a55]">Grid Snap</button>
          <button className="px-[3px]">Ortho</button>
          <button className="px-[3px]">Planar</button>
          <button className="bg-[#d5dae8] px-[3px] font-bold text-[#1d2a55]">Osnap</button>
          <button className="px-[3px]">SmartTrack</button>
          <button className="bg-[#d5dae8] px-[3px] font-bold text-[#1d2a55]">Gumball (CPlane)</button>
          <button className="flex items-center gap-[3px] px-[3px]"><Icon name="lock" className="size-[6px] opacity-40" />Auto CPlane (Object)</button>
          <button className="px-[3px]">Record History</button>
          <button className="bg-[#d5dae8] px-[3px] font-bold text-[#1d2a55]">Filter</button>
          <button className="px-[3px]">Absolute toleranc</button>
        </div>
        <button aria-label="Right panel" className="ml-auto"><Icon name="sidebar" className="size-2 -scale-x-100" /></button>
      </footer>
      <Grasshopper />
    </div>
  );
}
